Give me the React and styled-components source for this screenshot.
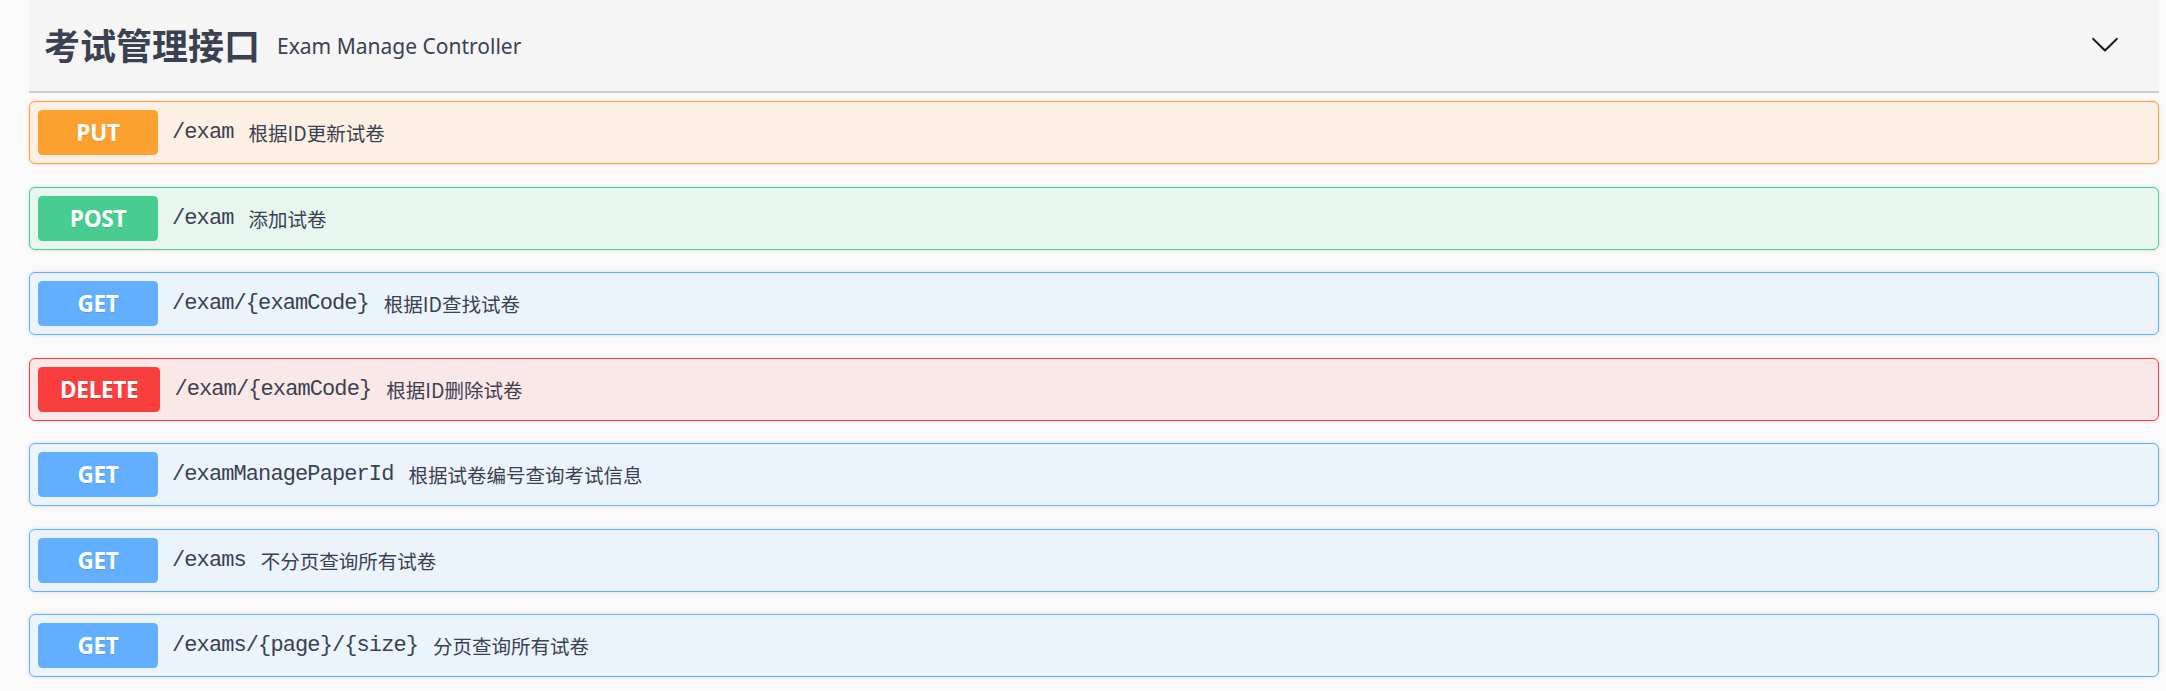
import React from "react";
import styled, { createGlobalStyle } from "styled-components";

const GlobalStyle = createGlobalStyle`
  html, body {
    margin: 0;
    padding: 0;
    background: #fafafa;
  }
  body {
    font-family: "Noto Sans", "Noto Sans CJK SC", sans-serif;
    color: #3b4151;
  }
`;

const METHOD_COLORS = {
  PUT: { main: "#fca130", bg: "#fcf0e4" },
  POST: { main: "#49cc90", bg: "#e7f6ef" },
  GET: { main: "#61affe", bg: "#ebf3fb" },
  DELETE: { main: "#f93e3e", bg: "#fae7e7" },
};

const Page = styled.div`
  padding: 0 7px 0 29px;
`;

const TagHeader = styled.div`
  display: flex;
  align-items: center;
  height: 93px;
  padding: 0 39px 4px 15px;
  box-sizing: border-box;
  background: #f5f5f5;
  border-bottom: 2px solid #cbcccf;
  margin-bottom: 8px;
`;

const TagTitle = styled.span`
  font-family: "Noto Sans CJK SC", "Noto Sans", sans-serif;
  font-size: 36px;
  font-weight: 700;
  color: #3b4151;
`;

const TagDesc = styled.span`
  flex: 1;
  margin-left: 17px;
  font-family: "Noto Sans", "Noto Sans CJK SC", sans-serif;
  font-size: 21px;
  color: #3b4151;
  padding-top: 4px;
`;

const Chevron = styled.svg`
  width: 30px;
  height: 30px;
  margin-top: 1px;
`;

const OpBlock = styled.div`
  display: flex;
  align-items: center;
  height: 63px;
  box-sizing: border-box;
  padding: 0 8px;
  margin-bottom: 22.5px;
  border: 1px solid ${(p) => p.$color.main};
  border-radius: 6px;
  background: ${(p) => p.$color.bg};
  box-shadow: 0 0 4px rgba(0, 0, 0, 0.12);
`;

const Method = styled.span`
  min-width: 120px;
  box-sizing: border-box;
  padding: 9px 22px;
  line-height: 27px;
  text-align: center;
  border-radius: 4.5px;
  background: ${(p) => p.$color.main};
  color: #fff;
  font-family: "Open Sans", "Noto Sans", sans-serif;
  font-size: 22.5px;
  font-weight: 700;
  letter-spacing: -0.3px;
  text-shadow: 0 1px 0 rgba(0, 0, 0, 0.1);
`;

const Path = styled.span`
  margin-left: 14px;
  font-family: "Liberation Mono", monospace;
  font-size: 22px;
  letter-spacing: -0.9px;
  color: #3b4151;
`;

const Summary = styled.span`
  margin-left: 15px;
  font-family: "Noto Sans CJK SC", "Noto Sans", sans-serif;
  font-size: 19.5px;
  color: #3b4151;
`;

const ops = [
  { method: "PUT", path: "/exam", summary: "根据ID更新试卷" },
  { method: "POST", path: "/exam", summary: "添加试卷" },
  { method: "GET", path: "/exam/{examCode}", summary: "根据ID查找试卷" },
  { method: "DELETE", path: "/exam/{examCode}", summary: "根据ID删除试卷" },
  { method: "GET", path: "/examManagePaperId", summary: "根据试卷编号查询考试信息" },
  { method: "GET", path: "/exams", summary: "不分页查询所有试卷" },
  { method: "GET", path: "/exams/{page}/{size}", summary: "分页查询所有试卷" },
];

function App() {
  return (
    <Page>
      <GlobalStyle />
      <TagHeader>
        <TagTitle>考试管理接口</TagTitle>
        <TagDesc>Exam Manage Controller</TagDesc>
        <Chevron viewBox="0 0 20 20">
          <path
            fill="#1a1a1a"
            d="M17.418 6.109c.272-.268.709-.268.979 0s.271.701 0 .969l-7.908 7.83c-.27.268-.707.268-.979 0l-7.908-7.83c-.27-.268-.27-.701 0-.969.271-.268.709-.268.979 0L10 13.25l7.418-7.141z"
          />
        </Chevron>
      </TagHeader>
      {ops.map((op, i) => {
        const color = METHOD_COLORS[op.method];
        return (
          <OpBlock key={i} $color={color}>
            <Method $color={color}>{op.method}</Method>
            <Path>{op.path}</Path>
            <Summary>{op.summary}</Summary>
          </OpBlock>
        );
      })}
    </Page>
  );
}

export default App;
